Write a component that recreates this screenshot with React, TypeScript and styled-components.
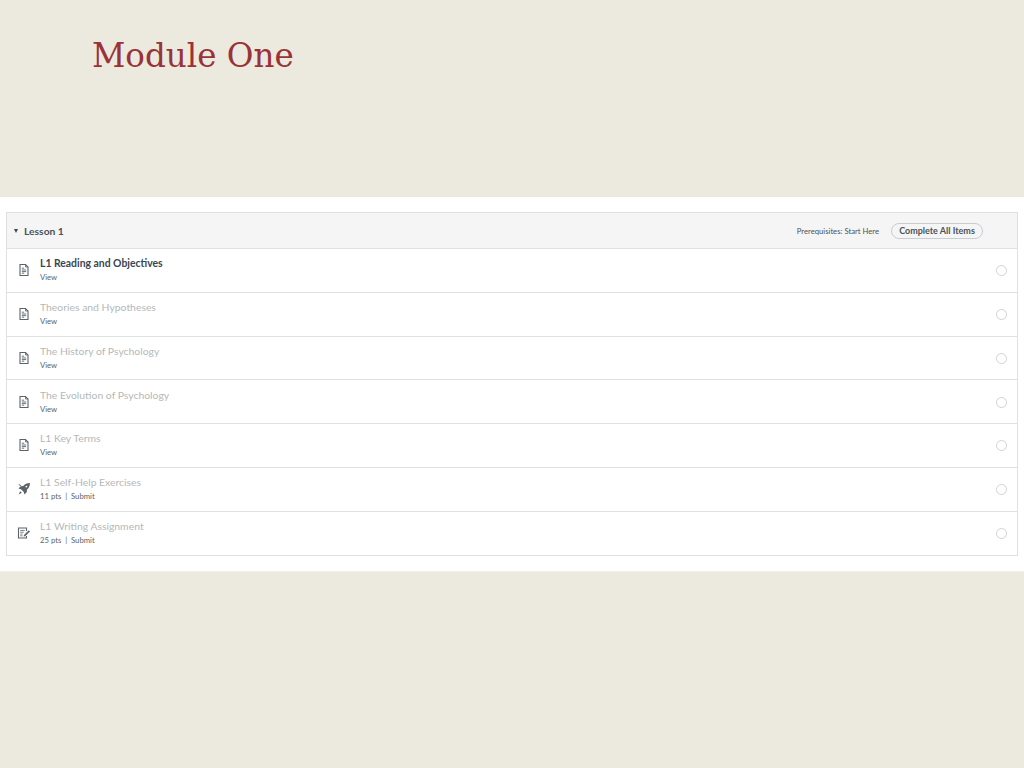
import {FunctionComponent} from 'react'
import styled, {createGlobalStyle} from 'styled-components'

const GlobalStyle = createGlobalStyle`
  html, body {
    margin: 0;
    padding: 0;
    background-color: #ece9de;
    font-family: Lato, "Liberation Sans", sans-serif;
  }
`

const Page = styled.div`
  width: 1024px;
  height: 768px;
  overflow: hidden;
  display: flex;
  flex-direction: column;
  background-color: #ece9de;
`

const TitleBand = styled.div`
  height: 197px;
  box-sizing: border-box;
  padding: 35px 0 0 92px;
`

const Title = styled.h1`
  margin: 0;
  font-family: "DejaVu Serif", serif;
  font-weight: 400;
  font-size: 32.6px;
  line-height: 42px;
  color: #9a3337;
`

const Sheet = styled.div`
  height: 375px;
  box-sizing: border-box;
  padding: 15px 6px 0 6px;
  background-color: #fff;
  border-bottom: 1px solid #f0f0ec;
`

const Module = styled.div`
  height: 344px;
  box-sizing: border-box;
  border: 1px solid #dfe0e0;
`

const Header = styled.div`
  height: 36px;
  box-sizing: border-box;
  display: flex;
  align-items: center;
  padding: 0 34px 0 7px;
  background-color: #f5f5f5;
  border-bottom: 1px solid #dfe0e0;
`

const Caret = styled.span`
  width: 0;
  height: 0;
  margin-right: 6px;
  margin-top: 1px;
  border-left: 2.5px solid transparent;
  border-right: 2.5px solid transparent;
  border-top: 4px solid #3f484f;
`

const LessonName = styled.span`
  font-size: 10.3px;
  font-weight: 700;
  color: #4a5359;
  flex: 1;
`

const Prerequisites = styled.span`
  font-size: 7.7px;
  color: #4a5359;
  margin-right: 12px;
`

const CompleteButton = styled.span`
  box-sizing: border-box;
  width: 92px;
  height: 16px;
  display: flex;
  align-items: center;
  justify-content: center;
  border: 1px solid #c7cdd1;
  border-radius: 8px;
  background-color: #f5f5f5;
  font-size: 9px;
  font-weight: 700;
  color: #4a5359;
`

const Row = styled.div`
  height: 43.75px;
  box-sizing: border-box;
  display: flex;
  align-items: center;
  padding: 0 10px 0 10px;
  border-bottom: 1px solid #dfe0e0;

  &:last-child {
    border-bottom: none;
  }
`

const IconSlot = styled.div`
  width: 14px;
  height: 14px;
  margin-right: 9px;
  color: #5c646a;

  svg {
    display: block;
  }
`

const ItemText = styled.div`
  flex: 1;
  display: flex;
  flex-direction: column;
  gap: 3px;
  margin-top: -1px;
`

const ItemTitle = styled.div<{$active: boolean}>`
  font-size: 10.4px;
  line-height: 12px;
  font-weight: ${props => (props.$active ? 700 : 400)};
  color: ${props => (props.$active ? '#3a464f' : '#b5b8ba')};
`

const ItemMeta = styled.div`
  font-size: 7.7px;
  line-height: 10px;
  color: #5c646a;
  white-space: pre;
`

const Status = styled.div`
  width: 9px;
  height: 9px;
  margin-top: 1px;
  border: 1px solid #cfd3d6;
  border-radius: 50%;
`

const PageIcon = () => (
  <svg width="14" height="14" viewBox="0 0 14 14" fill="none" stroke="currentColor">
    <path d="M3 1.5h5.5L11 4v8.5H3z" strokeWidth="1.1" />
    <path d="M8.5 1.5V4H11" strokeWidth="0.8" />
    <path d="M4.8 5.2h2.4M4.8 7h4.4M4.8 8.6h4.4M4.8 10.2h2.4" strokeWidth="0.9" />
  </svg>
)

const QuizIcon = () => (
  <svg width="14" height="14" viewBox="0 0 14 14" fill="currentColor">
    <path d="M13 1c-3 .1-5.200 1.200-6.800 3.100L3.800 4.200 1.400 6.600l2.600.6 2.800 2.800.6 2.600 2.400-2.400.1-2.400C11.800 6.200 12.900 4 13 1z" />
    <path d="M1.200 1.800l3 1.400-1 1zM3.200 9.200l1.600 1.600-3.200 1.800z" />
    <circle cx="9.400" cy="4.600" r="0.9" fill="#fff" />
  </svg>
)

const AssignmentIcon = () => (
  <svg width="14" height="14" viewBox="0 0 14 14" fill="none" stroke="currentColor">
    <path d="M9.500 5V2H1.500v10h8V10" strokeWidth="1.1" />
    <path d="M3.200 4.400h4.600M3.200 6.200h3.600M3.200 8h2.400M3.200 9.800h2.400" strokeWidth="0.8" />
    <path d="M7 9l4.800-4.800 1.200 1.200L8.200 10.200 6.600 10.600z" fill="currentColor" stroke="none" />
  </svg>
)

type ItemKind = 'page' | 'quiz' | 'assignment'

interface Item {
  title: string
  kind: ItemKind
  meta: string
  active?: boolean
}

const items: Item[] = [
  {title: 'L1 Reading and Objectives', kind: 'page', meta: 'View', active: true},
  {title: 'Theories and Hypotheses', kind: 'page', meta: 'View'},
  {title: 'The History of Psychology', kind: 'page', meta: 'View'},
  {title: 'The Evolution of Psychology', kind: 'page', meta: 'View'},
  {title: 'L1 Key Terms', kind: 'page', meta: 'View'},
  {title: 'L1 Self-Help Exercises', kind: 'quiz', meta: '11 pts  |  Submit'},
  {title: 'L1 Writing Assignment', kind: 'assignment', meta: '25 pts  |  Submit'},
]

const icons: Record<ItemKind, FunctionComponent> = {
  page: PageIcon,
  quiz: QuizIcon,
  assignment: AssignmentIcon,
}

const ModuleRow: FunctionComponent<Item> = ({title, kind, meta, active}) => {
  const Icon = icons[kind]
  return (
    <Row>
      <IconSlot>
        <Icon />
      </IconSlot>
      <ItemText>
        <ItemTitle $active={!!active}>{title}</ItemTitle>
        <ItemMeta>{meta}</ItemMeta>
      </ItemText>
      <Status />
    </Row>
  )
}

const App = () => {
  return (
    <Page>
      <GlobalStyle />
      <TitleBand>
        <Title>Module One</Title>
      </TitleBand>
      <Sheet>
        <Module>
          <Header>
            <Caret />
            <LessonName>Lesson 1</LessonName>
            <Prerequisites>Prerequisites: Start Here</Prerequisites>
            <CompleteButton>Complete All Items</CompleteButton>
          </Header>
          {items.map(item => (
            <ModuleRow key={item.title} {...item} />
          ))}
        </Module>
      </Sheet>
    </Page>
  )
}

export default App
